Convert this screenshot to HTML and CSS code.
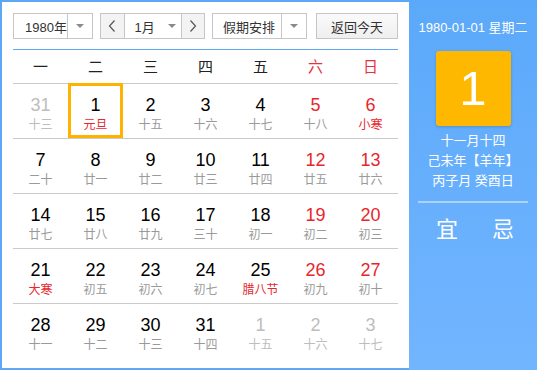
FILE: index.html
```html
<!DOCTYPE html>
<html lang="zh-CN">
<head>
<meta charset="utf-8">
<title>万年历</title>
<link rel="stylesheet" href="styles.css">
</head>
<body>
<div class="calendar">
  <div class="main">
    <div class="toolbar">
      <div class="select year-select">
        <span class="select-text">1980年</span>
        <span class="select-arrow"><i class="tri"></i></span>
      </div>
      <div class="month-group">
        <span class="nav-btn">
          <svg width="8" height="12" viewBox="0 0 8 12"><polyline points="6.5,0.5 1.5,6 6.5,11.5" fill="none" stroke="#555" stroke-width="1.2"/></svg>
        </span>
        <span class="month-mid">
          <span class="month-text">1月</span>
          <i class="tri"></i>
        </span>
        <span class="nav-btn">
          <svg width="8" height="12" viewBox="0 0 8 12"><polyline points="1.5,0.5 6.5,6 1.5,11.5" fill="none" stroke="#555" stroke-width="1.2"/></svg>
        </span>
      </div>
      <div class="select holiday-select">
        <span class="select-text">假期安排</span>
        <span class="select-arrow"><i class="tri"></i></span>
      </div>
      <div class="today-btn">返回今天</div>
    </div>
    <div class="weekdays">
      <span>一</span><span>二</span><span>三</span><span>四</span><span>五</span><span class="red">六</span><span class="red">日</span>
    </div>
    <div class="days">
      <div class="day other"><b>31</b><em>十三</em></div>
      <div class="day selected"><b>1</b><em class="fest">元旦</em></div>
      <div class="day"><b>2</b><em>十五</em></div>
      <div class="day"><b>3</b><em>十六</em></div>
      <div class="day"><b>4</b><em>十七</em></div>
      <div class="day weekend"><b>5</b><em>十八</em></div>
      <div class="day weekend"><b>6</b><em class="fest">小寒</em></div>

      <div class="day"><b>7</b><em>二十</em></div>
      <div class="day"><b>8</b><em>廿一</em></div>
      <div class="day"><b>9</b><em>廿二</em></div>
      <div class="day"><b>10</b><em>廿三</em></div>
      <div class="day"><b>11</b><em>廿四</em></div>
      <div class="day weekend"><b>12</b><em>廿五</em></div>
      <div class="day weekend"><b>13</b><em>廿六</em></div>

      <div class="day"><b>14</b><em>廿七</em></div>
      <div class="day"><b>15</b><em>廿八</em></div>
      <div class="day"><b>16</b><em>廿九</em></div>
      <div class="day"><b>17</b><em>三十</em></div>
      <div class="day"><b>18</b><em>初一</em></div>
      <div class="day weekend"><b>19</b><em>初二</em></div>
      <div class="day weekend"><b>20</b><em>初三</em></div>

      <div class="day"><b>21</b><em class="fest">大寒</em></div>
      <div class="day"><b>22</b><em>初五</em></div>
      <div class="day"><b>23</b><em>初六</em></div>
      <div class="day"><b>24</b><em>初七</em></div>
      <div class="day"><b>25</b><em class="fest">腊八节</em></div>
      <div class="day weekend"><b>26</b><em>初九</em></div>
      <div class="day weekend"><b>27</b><em>初十</em></div>

      <div class="day"><b>28</b><em>十一</em></div>
      <div class="day"><b>29</b><em>十二</em></div>
      <div class="day"><b>30</b><em>十三</em></div>
      <div class="day"><b>31</b><em>十四</em></div>
      <div class="day other"><b>1</b><em>十五</em></div>
      <div class="day other"><b>2</b><em>十六</em></div>
      <div class="day other"><b>3</b><em>十七</em></div>
    </div>
  </div>
  <div class="side">
    <div class="side-date">1980-01-01 星期二</div>
    <div class="big-day">1</div>
    <div class="lunar">
      <div>十一月十四</div>
      <div>己未年【羊年】</div>
      <div>丙子月 癸酉日</div>
    </div>
    <div class="side-line"></div>
    <div class="yiji"><span>宜</span><span>忌</span></div>
  </div>
</div>
</body>
</html>
```

FILE: styles.css
```css
* {
  box-sizing: border-box;
}

html, body {
  margin: 0;
  padding: 0;
  background: #fff;
}

body {
  font-family: "Liberation Sans", "Noto Sans CJK SC", sans-serif;
  color: #333;
}

.calendar {
  width: 537px;
  height: 370px;
  display: flex;
  border-top: 2px solid #5ca8f6;
  border-left: 2px solid #5ca8f6;
  border-bottom: 2px solid #5ea9f5;
}

.main {
  width: 407px;
  padding: 11px 11px 0 11px;
}

.toolbar {
  display: flex;
  height: 36px;
  padding-bottom: 10px;
  border-bottom: 1px solid #5fa8f3;
  box-sizing: content-box;
  height: 26px;
}

.select,
.month-group,
.today-btn {
  height: 26px;
  border: 1px solid #c6c6c6;
  display: flex;
  align-items: center;
  font-size: 13px;
  color: #333;
  background: #fff;
}

.year-select {
  width: 80px;
}

.year-select .select-text {
  width: 54px;
  padding-left: 11px;
}

.select-text {
  height: 100%;
  display: flex;
  align-items: center;
  border-right: 1px solid #c6c6c6;
}

.select-arrow {
  flex: 1;
  display: flex;
  justify-content: center;
  align-items: center;
}

.tri {
  display: block;
  width: 0;
  height: 0;
  border-left: 4px solid transparent;
  border-right: 4px solid transparent;
  border-top: 4px solid #8a8a8a;
}

.month-group {
  width: 105px;
  margin-left: 7px;
}

.nav-btn {
  width: 23px;
  height: 100%;
  background: #f3f3f3;
  display: flex;
  align-items: center;
  justify-content: center;
}

.nav-btn:last-child {
  width: 22px;
}

.month-mid {
  width: 60px;
  height: 100%;
  display: flex;
  align-items: center;
  padding-left: 10px;
  border-left: 1px solid #c6c6c6;
  border-right: 1px solid #c6c6c6;
}

.month-text {
  width: 33px;
}

.holiday-select {
  width: 95px;
  margin-left: 7px;
}

.holiday-select .select-text {
  width: 69px;
  padding-left: 10px;
}

.today-btn {
  width: 82px;
  margin-left: 9px;
  justify-content: center;
  background: linear-gradient(#fafafa, #efefef);
}

.weekdays {
  display: grid;
  grid-template-columns: repeat(7, 1fr);
  height: 33px;
  line-height: 33px;
  text-align: center;
  font-size: 15px;
  color: #222;
}

.weekdays .red {
  color: #e8313a;
}

.days {
  display: grid;
  grid-template-columns: repeat(7, 55px);
  grid-auto-rows: 55px;
}

.day {
  border-top: 1px solid #cacaca;
  padding-top: 11px;
  text-align: center;
  display: flex;
  flex-direction: column;
  align-items: center;
}

.day b {
  font-weight: normal;
  font-size: 18px;
  line-height: 20px;
  color: #000;
}

.day em {
  font-style: normal;
  font-size: 12px;
  line-height: 16px;
  margin-top: 2px;
  color: #9a9a9a;
}

.day.weekend b {
  color: #e8262d;
}

.day em.fest {
  color: #e8262d;
}

.day.other b,
.day.other em {
  color: #bdbdbd;
}

.day.selected {
  border: 3px solid #ffb300;
  padding-top: 9px;
}

.side {
  width: 128px;
  margin-top: -2px;
  margin-bottom: -2px;
  background: linear-gradient(#5ba9fa, #72b5ff);
  color: #fff;
  display: flex;
  flex-direction: column;
  align-items: center;
  padding-top: 20px;
}

.side-date {
  font-size: 13px;
  line-height: 16px;
}

.big-day {
  width: 75px;
  height: 75px;
  margin-top: 15px;
  background: #ffb800;
  border-radius: 3px;
  box-shadow: 0 1px 3px rgba(0, 0, 0, 0.18);
  font-size: 49px;
  line-height: 75px;
  text-align: center;
  color: #fff;
}

.lunar {
  margin-top: 5px;
  font-size: 13px;
  line-height: 20px;
  text-align: center;
}

.side-line {
  width: 110px;
  height: 2px;
  margin-top: 10px;
  background: rgba(255, 255, 255, 0.45);
}

.yiji {
  margin-top: 12px;
  display: flex;
  gap: 34px;
  font-size: 22px;
  line-height: 30px;
  padding-left: 4px;
}
```
